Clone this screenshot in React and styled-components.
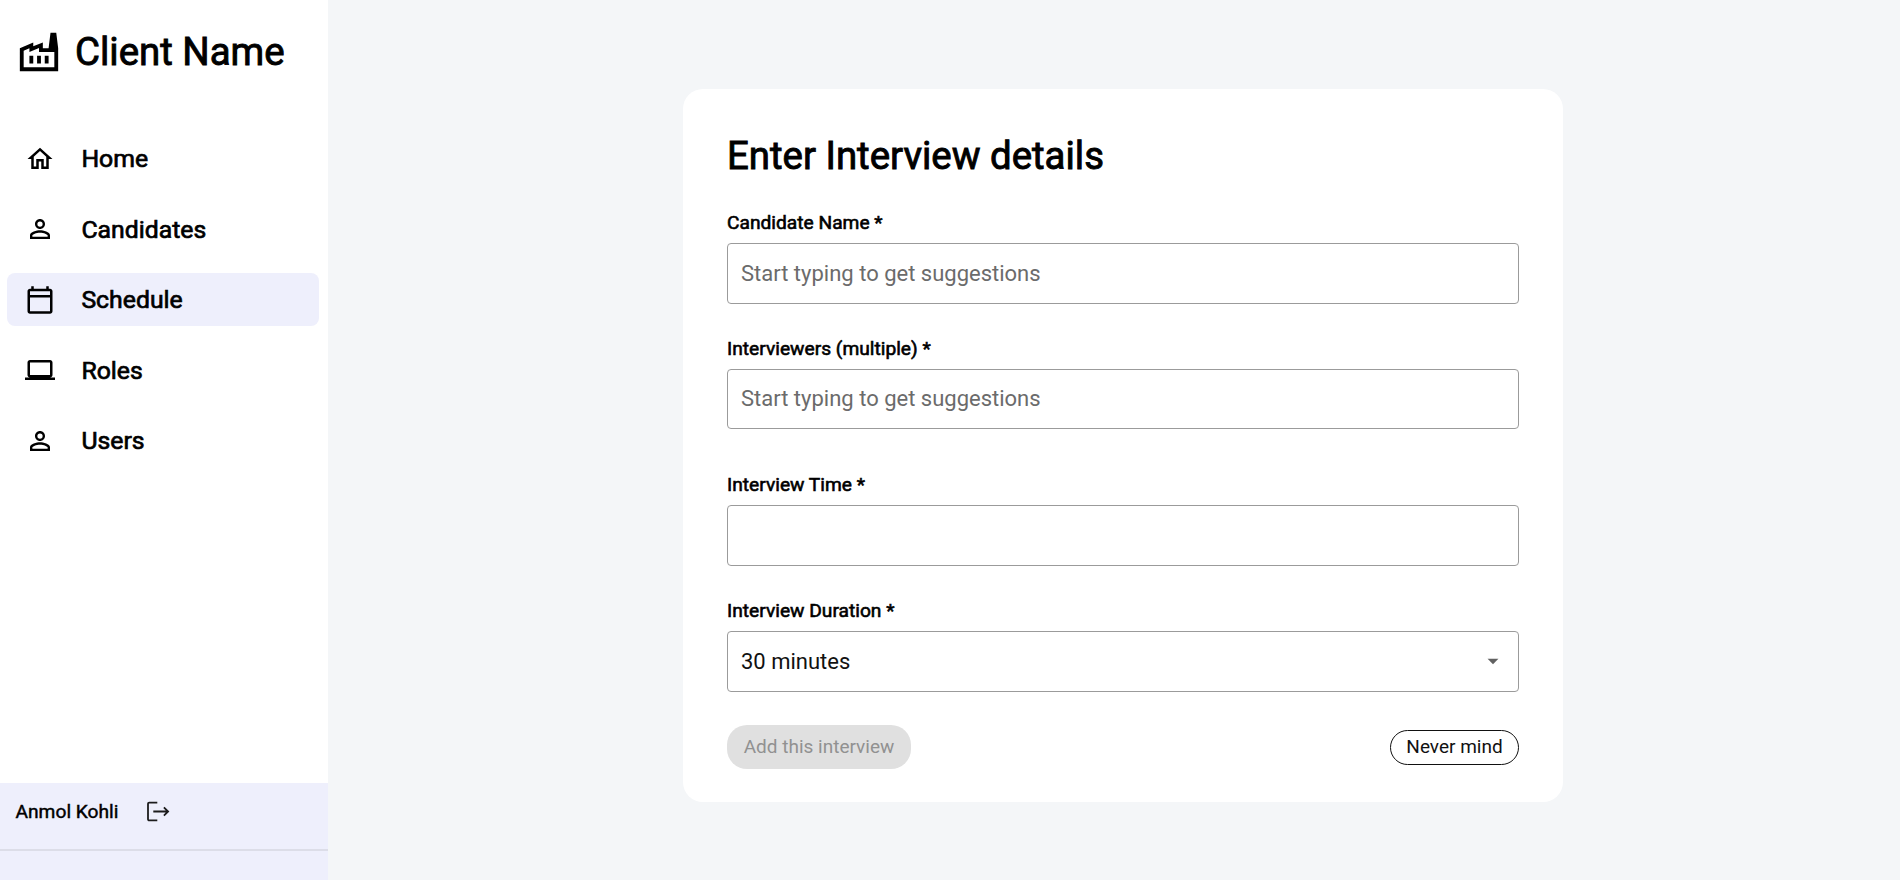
import React from "react";
import styled, { createGlobalStyle, css } from "styled-components";
import {
  MdOutlineFactory,
  MdOutlineHome,
  MdPersonOutline,
  MdOutlineCalendarToday,
  MdOutlineLaptop,
  MdArrowDropDown,
} from "react-icons/md";

const GlobalStyle = createGlobalStyle`
  * { box-sizing: border-box; }
  body {
    margin: 0;
    background: #f4f6f8;
    font-family: Roboto, "Liberation Sans", sans-serif;
    color: #000;
  }
`;

const heavy = css`
  font-weight: 400;
  -webkit-text-stroke: ${(p) => p.$stroke || 0.6}px currentColor;
`;

const Page = styled.div`
  display: flex;
  height: 880px;
  overflow: hidden;
`;

const Sidebar = styled.aside`
  width: 328px;
  flex: none;
  display: flex;
  flex-direction: column;
  background: #fff;
`;

const Brand = styled.header`
  display: flex;
  align-items: center;
  gap: 13px;
  height: 104px;
  padding-left: 16px;
`;

const BrandName = styled.h1`
  margin: 0;
  font-size: 38.4px;
  line-height: 46px;
  white-space: nowrap;
  ${heavy}
`;

const Nav = styled.nav`
  display: flex;
  flex-direction: column;
  gap: 17.6px;
  padding: 28px 9px 0 7px;
  flex: 1;
`;

const NavItem = styled.a`
  display: flex;
  align-items: center;
  gap: 26.4px;
  height: 53px;
  padding-left: 18px;
  border-radius: 8px;
  background: ${(p) => (p.$active ? "#eeeffc" : "transparent")};
`;

const NavLabel = styled.span`
  font-size: 24.8px;
  ${heavy}
`;

const Account = styled.footer`
  height: 97px;
  background: #eeeffc;
`;

const AccountRow = styled.div`
  display: flex;
  align-items: center;
  gap: 27.5px;
  height: 68px;
  padding: 0 0 9px 15.5px;
  border-bottom: 2px solid #dcdde8;
`;

const AccountName = styled.span`
  padding-bottom: 1px;
  font-size: 19.2px;
  ${heavy}
`;

const Main = styled.main`
  flex: 1;
  display: flex;
  justify-content: center;
  align-items: flex-start;
  padding: 89px 0 0 18px;
`;

const Card = styled.section`
  width: 880px;
  height: 713px;
  padding: 44px 44px 0;
  border-radius: 20px;
  background: #fff;
`;

const Title = styled.h2`
  margin: 0 0 18px;
  font-size: 38.4px;
  line-height: 46px;
  ${heavy}
`;

const Field = styled.div`
  margin-bottom: ${(p) => p.$gap}px;
`;

const Label = styled.label`
  display: block;
  height: 46px;
  padding-top: 15px;
  font-size: 19.2px;
  line-height: 22px;
  ${heavy}
`;

const Control = styled.div`
  display: flex;
  align-items: center;
  justify-content: space-between;
  height: ${(p) => p.$height || 61}px;
  padding: 0 12px 1px 13px;
  border: 1px solid #9b9b9b;
  border-radius: 4px;
  font-size: 22px;
  color: ${(p) => (p.$filled ? "#111" : "#6b6b6b")};
`;

const Actions = styled.div`
  display: flex;
  align-items: center;
  justify-content: space-between;
`;

const Button = styled.button`
  height: ${(p) => (p.$outlined ? 35 : 44)}px;
  width: ${(p) => (p.$outlined ? 129 : 184)}px;
  padding: 0 0 1px;
  border: ${(p) => (p.$outlined ? "1px solid #111" : "none")};
  border-radius: 20px;
  background: ${(p) => (p.$outlined ? "#fff" : "#e0e0e0")};
  color: ${(p) => (p.$outlined ? "#111" : "#919191")};
  font: 400 19px Roboto, "Liberation Sans", sans-serif;
  white-space: nowrap;
`;

const items = [
  { label: "Home", icon: MdOutlineHome },
  { label: "Candidates", icon: MdPersonOutline },
  { label: "Schedule", icon: MdOutlineCalendarToday, active: true },
  { label: "Roles", icon: MdOutlineLaptop },
  { label: "Users", icon: MdPersonOutline },
];

const LogoutIcon = () => (
  <svg width="24" height="24" viewBox="0 0 24 24" fill="none" stroke="#1c1c1c" strokeWidth="1.8">
    <path d="M11.3 2.6H3.2a1.2 1.2 0 0 0-1.2 1.2v15.4a1.2 1.2 0 0 0 1.2 1.2h8.1M7.3 11.5h14.5M17.9 7.3l4.2 4.2-4.2 4.2" />
  </svg>
);

export default function App() {
  return (
    <>
      <GlobalStyle />
      <Page>
        <Sidebar>
          <Brand>
            <MdOutlineFactory size={46} />
            <BrandName $stroke={0.9}>Client Name</BrandName>
          </Brand>
          <Nav>
            {items.map(({ label, icon: Icon, active }) => (
              <NavItem key={label} $active={active}>
                <Icon size={30} />
                <NavLabel $stroke={0.7}>{label}</NavLabel>
              </NavItem>
            ))}
          </Nav>
          <Account>
            <AccountRow>
              <AccountName $stroke={0.45}>Anmol Kohli</AccountName>
              <LogoutIcon />
            </AccountRow>
          </Account>
        </Sidebar>
        <Main>
          <Card>
            <Title $stroke={0.9}>Enter Interview details</Title>
            <Field $gap={19}>
              <Label>Candidate Name *</Label>
              <Control>Start typing to get suggestions</Control>
            </Field>
            <Field $gap={30}>
              <Label>Interviewers (multiple) *</Label>
              <Control $height={60}>Start typing to get suggestions</Control>
            </Field>
            <Field $gap={19}>
              <Label>Interview Time *</Label>
              <Control />
            </Field>
            <Field $gap={33}>
              <Label>Interview Duration *</Label>
              <Control $filled>
                30 minutes
                <MdArrowDropDown size={26} color="#616161" />
              </Control>
            </Field>
            <Actions>
              <Button disabled>Add this interview</Button>
              <Button $outlined>Never mind</Button>
            </Actions>
          </Card>
        </Main>
      </Page>
    </>
  );
}
